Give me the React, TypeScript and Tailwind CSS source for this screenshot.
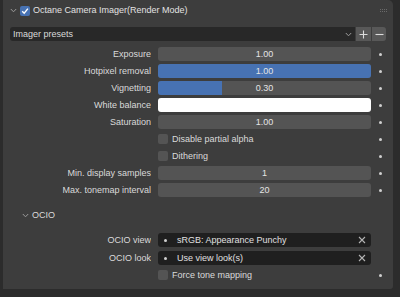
import React from "react";

const Dot = () => <div className="w-[3px] h-[3px] rounded-full bg-[#d0d0d0]" />;

function Row({ label, children, dot = true }: { label?: string; children: React.ReactNode; dot?: boolean }) {
  return (
    <div className="flex items-center h-[14px]">
      <div className="w-[148px] text-right text-[#dadada] leading-none truncate">{label}</div>
      <div className="ml-[7px] w-[213px] h-[14px] flex items-center">{children}</div>
      <div className="w-[18px] flex justify-center">{dot && <Dot />}</div>
    </div>
  );
}

function NumField({ value, fill = 0 }: { value: string; fill?: number }) {
  return (
    <div className="relative w-full h-full rounded-[3px] bg-[#545454] overflow-hidden">
      {fill > 0 && <div className="absolute inset-y-0 left-0 bg-[#4772b3]" style={{ width: `${fill * 100}%` }} />}
      <div className="relative h-full flex items-center justify-center text-[#e4e4e4] leading-none">{value}</div>
    </div>
  );
}

function Check({ label }: { label: string }) {
  return (
    <div className="flex items-center gap-[4px]">
      <div className="w-[10px] h-[10px] rounded-[2px] bg-[#545454]" />
      <span className="text-[#dadada] leading-none">{label}</span>
    </div>
  );
}

function Chevron({ className }: { className?: string }) {
  return (
    <svg width="7" height="5" viewBox="0 0 7 5" className={className}>
      <path d="M0.8 1 L3.5 3.8 L6.2 1" fill="none" stroke="#9a9a9a" strokeWidth="1" />
    </svg>
  );
}

function XIcon() {
  return (
    <svg width="8" height="8" viewBox="0 0 8 8">
      <path d="M1 1 L7 7 M7 1 L1 7" stroke="#b4b4b4" strokeWidth="1.1" />
    </svg>
  );
}

function SearchField({ value }: { value: string }) {
  return (
    <div className="w-full h-full rounded-[3px] bg-[#1f1f1f] flex items-center pl-[6px] pr-[5px]">
      <Dot />
      <span className="ml-[10px] flex-1 text-[#e0e0e0] leading-none">{value}</span>
      <XIcon />
    </div>
  );
}

export default function App() {
  return (
    <div className="w-[400px] h-[297px] bg-[#2c2c2c] overflow-hidden font-['Liberation_Sans',Arial,sans-serif] text-[9px]">
      <div className="ml-[3px] w-[390px] h-[289px] bg-[#3d3d3d] rounded-tr-[5px] rounded-br-[3px] flex flex-col">
        {/* header */}
        <div className="h-[21px] flex items-center pl-[7px] pr-[5px]">
          <Chevron />
          <div className="ml-[3px] w-[10px] h-[10px] rounded-[2px] bg-[#4772b3] flex items-center justify-center">
            <svg width="8" height="8" viewBox="0 0 8 8">
              <path d="M1.2 4.2 L3.2 6.2 L6.9 1.6" fill="none" stroke="#ffffff" strokeWidth="1.4" />
            </svg>
          </div>
          <span className="ml-[3px] text-[#e2e2e2] leading-none">Octane Camera Imager(Render Mode)</span>
          <div className="ml-auto grid grid-cols-4 gap-[1px] mr-[1px]">
            {Array.from({ length: 8 }).map((_, i) => (
              <div key={i} className="w-[1px] h-[1px] bg-[#6a6a6a]" />
            ))}
          </div>
        </div>

        {/* presets */}
        <div className="mt-[6px] h-[14px] flex items-center pl-[7px]">
          <div className="w-[345px] h-full rounded-l-[3px] bg-[#282828] flex items-center pl-[3px] pr-[3px]">
            <span className="flex-1 text-[#dadada] leading-none">Imager presets</span>
            <Chevron />
          </div>
          <div className="ml-[1px] w-[15px] h-full bg-[#585858] flex items-center justify-center">
            <svg width="9" height="9" viewBox="0 0 9 9">
              <path d="M4.5 0.5 V8.5 M0.5 4.5 H8.5" stroke="#dcdcdc" strokeWidth="1.1" />
            </svg>
          </div>
          <div className="ml-[1px] w-[14px] h-full rounded-r-[3px] bg-[#585858] flex items-center justify-center">
            <svg width="9" height="9" viewBox="0 0 9 9">
              <path d="M0.5 4.5 H8.5" stroke="#dcdcdc" strokeWidth="1.1" />
            </svg>
          </div>
        </div>

        {/* params */}
        <div className="mt-[6px] flex flex-col gap-[3px]">
          <Row label="Exposure"><NumField value="1.00" /></Row>
          <Row label="Hotpixel removal"><NumField value="1.00" fill={1} /></Row>
          <Row label="Vignetting"><NumField value="0.30" fill={0.3} /></Row>
          <Row label="White balance"><div className="w-full h-full rounded-[3px] bg-white" /></Row>
          <Row label="Saturation"><NumField value="1.00" /></Row>
          <Row><Check label="Disable partial alpha" /></Row>
          <Row><Check label="Dithering" /></Row>
          <Row label="Min. display samples"><NumField value="1" /></Row>
          <Row label="Max. tonemap interval"><NumField value="20" /></Row>
        </div>

        {/* OCIO subpanel */}
        <div className="mt-[10px] h-[16px] flex items-center pl-[19px]">
          <Chevron />
          <span className="ml-[3px] text-[#dadada] leading-none">OCIO</span>
        </div>
        <div className="mt-[10px] flex flex-col gap-[3px]">
          <Row label="OCIO view" dot={false}><SearchField value="sRGB: Appearance Punchy" /></Row>
          <div className="mt-[1px]">
            <Row label="OCIO look" dot={false}><SearchField value="Use view look(s)" /></Row>
          </div>
          <Row><Check label="Force tone mapping" /></Row>
        </div>
      </div>
    </div>
  );
}
